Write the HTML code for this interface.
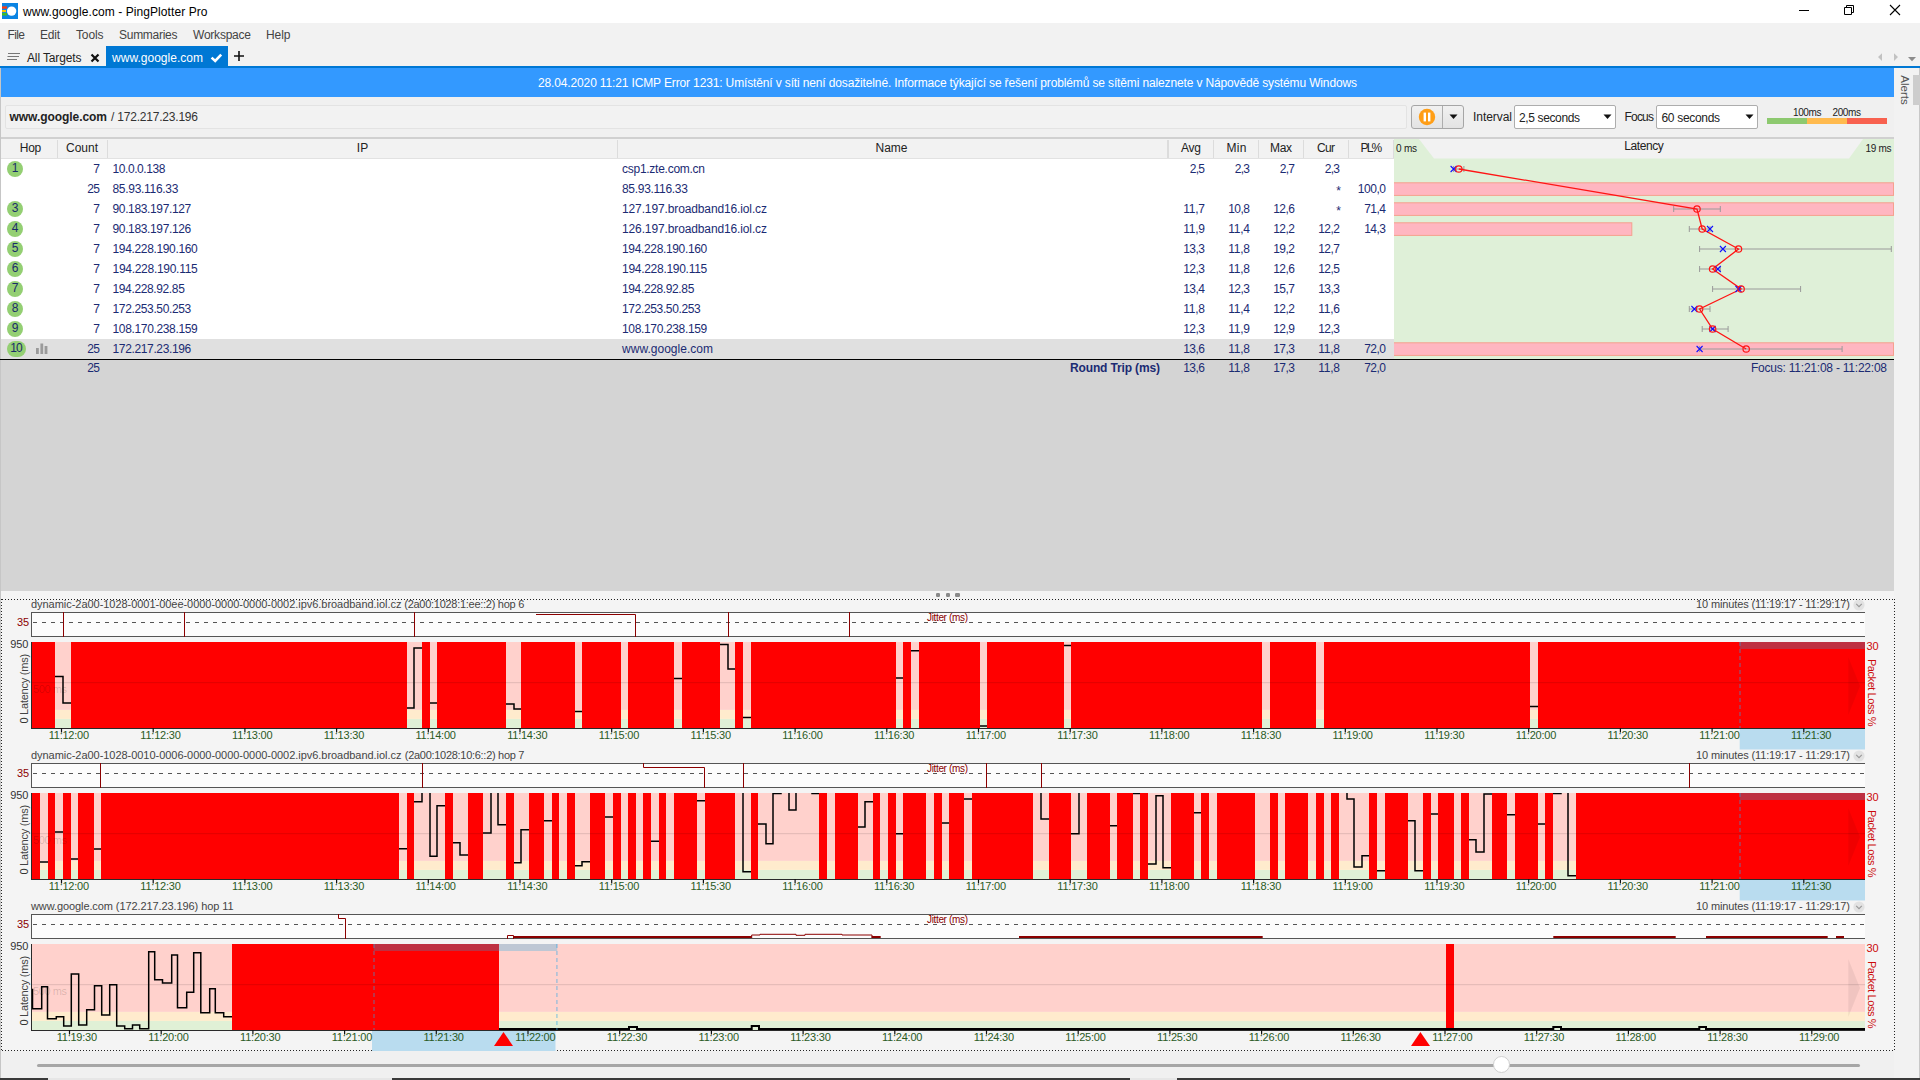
<!DOCTYPE html>
<html lang="en"><head><meta charset="utf-8"><title>www.google.com - PingPlotter Pro</title>
<style>
html,body{margin:0;padding:0;}
body{width:1920px;height:1080px;overflow:hidden;background:#f0f0f0;position:relative;font-family:"Liberation Sans",sans-serif;}
#app div,#app span,#app svg{position:absolute;}
#app span{white-space:nowrap;}
#app{position:absolute;left:0;top:0;width:1920px;height:1080px;overflow:hidden;}
</style></head><body><div id="app">
<div style="left:0px;top:0px;width:1920px;height:23px;background:#ffffff;"></div>
<svg style="left:2px;top:3px" width="16" height="16" viewBox="0 0 16 16"><rect x="0" y="0" width="16" height="16" fill="#0b84e3"/><rect x="0" y="3.4" width="5" height="2.3" fill="#ff3a10"/><rect x="0" y="7" width="4" height="2.1" fill="#ffc400"/><rect x="0" y="10" width="5" height="2.5" fill="#3fba2a"/><circle cx="9.6" cy="8.1" r="4.7" fill="#fff"/></svg>
<span style="left:23.00px;top:4.20px;font-size:12px;line-height:17px;color:#000;letter-spacing:0.078px;">www.google.com - PingPlotter Pro</span>
<svg style="left:1780px;top:0" width="140" height="23" viewBox="0 0 140 23"><path d="M19 10.5h10" stroke="#000" stroke-width="1" fill="none"/><path d="M64.5 7.5h7v7h-7z M66.5 7.5v-2h7v7h-2" stroke="#000" stroke-width="1" fill="none"/><path d="M110 5l10 10 M120 5l-10 10" stroke="#000" stroke-width="1.1" fill="none"/></svg>
<div style="left:0px;top:23px;width:1920px;height:45px;background:#f2f2f2;"></div>
<span style="left:7.50px;top:27.20px;font-size:12px;line-height:17px;color:#444;letter-spacing:-0.612px;">File</span>
<span style="left:40.00px;top:27.20px;font-size:12px;line-height:17px;color:#444;letter-spacing:-0.226px;">Edit</span>
<span style="left:76.00px;top:27.20px;font-size:12px;line-height:17px;color:#444;letter-spacing:-0.129px;">Tools</span>
<span style="left:119.00px;top:27.20px;font-size:12px;line-height:17px;color:#444;letter-spacing:-0.273px;">Summaries</span>
<span style="left:193.00px;top:27.20px;font-size:12px;line-height:17px;color:#444;letter-spacing:-0.225px;">Workspace</span>
<span style="left:266.00px;top:27.20px;font-size:12px;line-height:17px;color:#444;letter-spacing:-0.060px;">Help</span>
<svg style="left:7px;top:52px" width="14" height="10" viewBox="0 0 14 10"><path d="M1 1.5h12 M0.5 4.5h11.5 M0 7.5h10" stroke="#777" stroke-width="1.2" fill="none"/></svg>
<span style="left:27.00px;top:50.20px;font-size:12px;line-height:17px;color:#222;letter-spacing:-0.131px;">All Targets</span>
<svg style="left:90px;top:53px" width="10" height="10" viewBox="0 0 10 10"><path d="M1.5 1.5l7 7 M8.5 1.5l-7 7" stroke="#111" stroke-width="2.2" fill="none"/></svg>
<div style="left:106px;top:46px;width:122px;height:22px;background:#0078d4;"></div>
<span style="left:112.00px;top:50.20px;font-size:12px;line-height:17px;color:#fff;letter-spacing:0.022px;">www.google.com</span>
<svg style="left:210px;top:52px" width="13" height="11" viewBox="0 0 13 11"><path d="M1.6 5.6l3.6 3.4 6-6.4" stroke="#fff" stroke-width="2.6" fill="none"/></svg>
<svg style="left:233px;top:50px" width="12" height="12" viewBox="0 0 12 12"><path d="M6 1v10 M1 6h10" stroke="#111" stroke-width="1.6" fill="none"/></svg>
<svg style="left:1874px;top:51px" width="46" height="12" viewBox="0 0 46 12"><path d="M8 2.3l-4 3.8 4 3.8z M20 2.3l4 3.8-4 3.8z" fill="#c2c2c2"/><path d="M34 6h8l-4 4.2z" fill="#8c8c8c"/></svg>
<div style="left:0px;top:66px;width:1920px;height:2px;background:#0078d4;"></div>
<div style="left:1px;top:68px;width:1893px;height:29px;background:#3399ff;"></div>
<span style="left:538.00px;top:75.20px;font-size:12px;line-height:17px;color:#fff;letter-spacing:-0.139px;">28.04.2020 11:21 ICMP Error 1231: Umístění v síti není dosažitelné. Informace týkající se řešení problémů se sítěmi naleznete v Nápovědě systému Windows</span>
<div style="left:1894px;top:68px;width:26px;height:1012px;background:#f2f2f2;"></div>
<div style="left:1919px;top:68px;width:1px;height:1010px;background:#c8c8c8;"></div>
<span style="left:1889.50px;top:82.20px;font-size:11.5px;line-height:16px;color:#555;transform:rotate(90deg);transform-origin:center center;">Alerts</span>
<div style="left:1913px;top:75px;width:7px;height:30px;background:#cdcdcd;"></div>
<div style="left:1px;top:97px;width:1893px;height:40px;background:#f0f0f0;"></div>
<div style="left:5px;top:105px;width:1402px;height:24px;background:#f2f2f2;border:1px solid #e3e3e3;box-sizing:border-box;border-radius:2px;"></div>
<span style="left:9.50px;top:109.20px;font-size:12px;line-height:17px;color:#222;letter-spacing:-0.056px;font-weight:bold;">www.google.com</span>
<span style="left:111.00px;top:109.20px;font-size:12px;line-height:17px;color:#333;letter-spacing:-0.206px;">/ 172.217.23.196</span>
<div style="left:1411px;top:105px;width:53px;height:24px;background:linear-gradient(#f1f1f1,#e3e3e3);border:1px solid #a6a6a6;box-sizing:border-box;border-radius:3px;"></div>
<div style="left:1442px;top:106px;width:1px;height:22px;background:#adadad;"></div>
<svg style="left:1418px;top:108px" width="18" height="18" viewBox="0 0 18 18"><circle cx="9" cy="9" r="8.2" fill="#ff9e16"/><rect x="5.6" y="4.6" width="2.4" height="8.8" fill="#fff"/><rect x="10" y="4.6" width="2.4" height="8.8" fill="#fff"/></svg>
<svg style="left:1449px;top:114px" width="9" height="6" viewBox="0 0 9 6"><path d="M0.5 0.5h8l-4 4.5z" fill="#111"/></svg>
<span style="left:1473.00px;top:109.20px;font-size:12px;line-height:17px;color:#222;letter-spacing:-0.050px;">Interval</span>
<div style="left:1514px;top:105px;width:102px;height:24px;background:#fff;border:1px solid #adadad;box-sizing:border-box;border-radius:2px;"></div>
<span style="left:1519.00px;top:110.20px;font-size:12px;line-height:17px;color:#222;letter-spacing:-0.371px;">2,5 seconds</span>
<svg style="left:1603px;top:114px" width="9" height="6" viewBox="0 0 9 6"><path d="M0.5 0.5h8l-4 4.5z" fill="#111"/></svg>
<span style="left:1624.50px;top:109.20px;font-size:12px;line-height:17px;color:#222;letter-spacing:-0.795px;">Focus</span>
<div style="left:1656px;top:105px;width:102px;height:24px;background:#fff;border:1px solid #adadad;box-sizing:border-box;border-radius:2px;"></div>
<span style="left:1661.50px;top:110.20px;font-size:12px;line-height:17px;color:#222;letter-spacing:-0.320px;">60 seconds</span>
<svg style="left:1745px;top:114px" width="9" height="6" viewBox="0 0 9 6"><path d="M0.5 0.5h8l-4 4.5z" fill="#111"/></svg>
<span style="left:1793.00px;top:106.20px;font-size:10px;line-height:14px;color:#222;letter-spacing:-0.379px;">100ms</span>
<span style="left:1832.50px;top:106.20px;font-size:10px;line-height:14px;color:#222;letter-spacing:-0.379px;">200ms</span>
<div style="left:1766.5px;top:118.3px;width:40px;height:6px;background:#8dc96f;"></div>
<div style="left:1806.5px;top:118.3px;width:40.5px;height:6px;background:#ffba4e;"></div>
<div style="left:1847px;top:118.3px;width:39.5px;height:6px;background:#f8614f;"></div>
<div style="left:1px;top:137px;width:1893px;height:2px;background:#d0d0d0;"></div>
<div style="left:1px;top:139px;width:1893px;height:20px;background:#f2f2f2;"></div>
<div style="left:1px;top:158px;width:1393px;height:1px;background:#e2e2e2;"></div>
<div style="left:1px;top:159px;width:1393px;height:200px;background:#ffffff;"></div>
<div style="left:1px;top:339px;width:1393px;height:20px;background:#e0e0e0;"></div>
<div style="left:1px;top:360px;width:1893px;height:231px;background:#d4d4d4;"></div>
<div style="left:0px;top:68px;width:1px;height:1010px;background:#c6c6c6;"></div>
<div style="left:57px;top:140px;width:1px;height:18px;background:#dcdcdc;"></div>
<div style="left:107px;top:140px;width:1px;height:18px;background:#dcdcdc;"></div>
<div style="left:617px;top:140px;width:1px;height:18px;background:#dcdcdc;"></div>
<div style="left:1168px;top:140px;width:1px;height:18px;background:#dcdcdc;"></div>
<div style="left:1213px;top:140px;width:1px;height:18px;background:#dcdcdc;"></div>
<div style="left:1258px;top:140px;width:1px;height:18px;background:#dcdcdc;"></div>
<div style="left:1303px;top:140px;width:1px;height:18px;background:#dcdcdc;"></div>
<div style="left:1348px;top:140px;width:1px;height:18px;background:#dcdcdc;"></div>
<div style="left:1393px;top:140px;width:1px;height:18px;background:#dcdcdc;"></div>
<div style="left:1166.5px;top:140px;width:1px;height:18px;background:#dcdcdc;"></div>
<span style="left:19.75px;top:140.00px;font-size:12px;line-height:17px;color:#222;letter-spacing:-0.257px;">Hop</span>
<span style="left:66.00px;top:140.00px;font-size:12px;line-height:17px;color:#222;letter-spacing:-0.006px;">Count</span>
<span style="left:356.83px;top:140.00px;font-size:12px;line-height:17px;color:#222;">IP</span>
<span style="left:875.50px;top:140.00px;font-size:12px;line-height:17px;color:#222;letter-spacing:-0.004px;">Name</span>
<span style="left:1181.00px;top:140.00px;font-size:12px;line-height:17px;color:#222;letter-spacing:-0.231px;">Avg</span>
<span style="left:1226.50px;top:140.00px;font-size:12px;line-height:17px;color:#222;letter-spacing:0.332px;">Min</span>
<span style="left:1270.00px;top:140.00px;font-size:12px;line-height:17px;color:#222;letter-spacing:-0.335px;">Max</span>
<span style="left:1317.00px;top:140.00px;font-size:12px;line-height:17px;color:#222;letter-spacing:-0.668px;">Cur</span>
<span style="left:1360.55px;top:140.00px;font-size:12px;line-height:17px;color:#222;letter-spacing:-1.924px;">PL%</span>
<div style="left:7px;top:160.7px;width:16px;height:16px;border-radius:8px;background:#94cf73"></div>
<span style="left:11.66px;top:160.40px;font-size:12px;line-height:17px;color:#1a2a6a;">1</span>
<span style="left:93.33px;top:161.40px;font-size:12px;line-height:17px;color:#1b2b73;">7</span>
<span style="left:112.50px;top:161.40px;font-size:12px;line-height:17px;color:#1b2b73;letter-spacing:-0.426px;">10.0.0.138</span>
<span style="left:622.00px;top:161.40px;font-size:12px;line-height:17px;color:#1b2b73;letter-spacing:-0.264px;">csp1.zte.com.cn</span>
<span style="left:1189.66px;top:161.40px;font-size:12px;line-height:17px;color:#1b2b73;letter-spacing:-0.671px;">2,5</span>
<span style="left:1234.66px;top:161.40px;font-size:12px;line-height:17px;color:#1b2b73;letter-spacing:-0.671px;">2,3</span>
<span style="left:1279.66px;top:161.40px;font-size:12px;line-height:17px;color:#1b2b73;letter-spacing:-0.671px;">2,7</span>
<span style="left:1324.66px;top:161.40px;font-size:12px;line-height:17px;color:#1b2b73;letter-spacing:-0.671px;">2,3</span>
<span style="left:87.26px;top:181.40px;font-size:12px;line-height:17px;color:#1b2b73;letter-spacing:-0.608px;">25</span>
<span style="left:112.50px;top:181.40px;font-size:12px;line-height:17px;color:#1b2b73;letter-spacing:-0.304px;">85.93.116.33</span>
<span style="left:622.00px;top:181.40px;font-size:12px;line-height:17px;color:#1b2b73;letter-spacing:-0.304px;">85.93.116.33</span>
<span style="left:1336.33px;top:182.90px;font-size:12px;line-height:17px;color:#1b2b73;">*</span>
<span style="left:1357.72px;top:181.40px;font-size:12px;line-height:17px;color:#1b2b73;letter-spacing:-0.438px;">100,0</span>
<div style="left:7px;top:200.7px;width:16px;height:16px;border-radius:8px;background:#94cf73"></div>
<span style="left:11.66px;top:200.40px;font-size:12px;line-height:17px;color:#1a2a6a;">3</span>
<span style="left:93.33px;top:201.40px;font-size:12px;line-height:17px;color:#1b2b73;">7</span>
<span style="left:112.50px;top:201.40px;font-size:12px;line-height:17px;color:#1b2b73;letter-spacing:-0.357px;">90.183.197.127</span>
<span style="left:622.00px;top:201.40px;font-size:12px;line-height:17px;color:#1b2b73;letter-spacing:-0.125px;">127.197.broadband16.iol.cz</span>
<span style="left:1183.19px;top:201.40px;font-size:12px;line-height:17px;color:#1b2b73;letter-spacing:-0.218px;">11,7</span>
<span style="left:1228.19px;top:201.40px;font-size:12px;line-height:17px;color:#1b2b73;letter-spacing:-0.515px;">10,8</span>
<span style="left:1273.19px;top:201.40px;font-size:12px;line-height:17px;color:#1b2b73;letter-spacing:-0.515px;">12,6</span>
<span style="left:1336.33px;top:202.90px;font-size:12px;line-height:17px;color:#1b2b73;">*</span>
<span style="left:1364.19px;top:201.40px;font-size:12px;line-height:17px;color:#1b2b73;letter-spacing:-0.515px;">71,4</span>
<div style="left:7px;top:220.7px;width:16px;height:16px;border-radius:8px;background:#94cf73"></div>
<span style="left:11.66px;top:220.40px;font-size:12px;line-height:17px;color:#1a2a6a;">4</span>
<span style="left:93.33px;top:221.40px;font-size:12px;line-height:17px;color:#1b2b73;">7</span>
<span style="left:112.50px;top:221.40px;font-size:12px;line-height:17px;color:#1b2b73;letter-spacing:-0.357px;">90.183.197.126</span>
<span style="left:622.00px;top:221.40px;font-size:12px;line-height:17px;color:#1b2b73;letter-spacing:-0.125px;">126.197.broadband16.iol.cz</span>
<span style="left:1183.19px;top:221.40px;font-size:12px;line-height:17px;color:#1b2b73;letter-spacing:-0.218px;">11,9</span>
<span style="left:1228.19px;top:221.40px;font-size:12px;line-height:17px;color:#1b2b73;letter-spacing:-0.218px;">11,4</span>
<span style="left:1273.19px;top:221.40px;font-size:12px;line-height:17px;color:#1b2b73;letter-spacing:-0.515px;">12,2</span>
<span style="left:1318.19px;top:221.40px;font-size:12px;line-height:17px;color:#1b2b73;letter-spacing:-0.515px;">12,2</span>
<span style="left:1364.19px;top:221.40px;font-size:12px;line-height:17px;color:#1b2b73;letter-spacing:-0.515px;">14,3</span>
<div style="left:7px;top:240.7px;width:16px;height:16px;border-radius:8px;background:#94cf73"></div>
<span style="left:11.66px;top:240.40px;font-size:12px;line-height:17px;color:#1a2a6a;">5</span>
<span style="left:93.33px;top:241.40px;font-size:12px;line-height:17px;color:#1b2b73;">7</span>
<span style="left:112.50px;top:241.40px;font-size:12px;line-height:17px;color:#1b2b73;letter-spacing:-0.346px;">194.228.190.160</span>
<span style="left:622.00px;top:241.40px;font-size:12px;line-height:17px;color:#1b2b73;letter-spacing:-0.346px;">194.228.190.160</span>
<span style="left:1183.19px;top:241.40px;font-size:12px;line-height:17px;color:#1b2b73;letter-spacing:-0.515px;">13,3</span>
<span style="left:1228.19px;top:241.40px;font-size:12px;line-height:17px;color:#1b2b73;letter-spacing:-0.218px;">11,8</span>
<span style="left:1273.19px;top:241.40px;font-size:12px;line-height:17px;color:#1b2b73;letter-spacing:-0.515px;">19,2</span>
<span style="left:1318.19px;top:241.40px;font-size:12px;line-height:17px;color:#1b2b73;letter-spacing:-0.515px;">12,7</span>
<div style="left:7px;top:260.7px;width:16px;height:16px;border-radius:8px;background:#94cf73"></div>
<span style="left:11.66px;top:260.40px;font-size:12px;line-height:17px;color:#1a2a6a;">6</span>
<span style="left:93.33px;top:261.40px;font-size:12px;line-height:17px;color:#1b2b73;">7</span>
<span style="left:112.50px;top:261.40px;font-size:12px;line-height:17px;color:#1b2b73;letter-spacing:-0.283px;">194.228.190.115</span>
<span style="left:622.00px;top:261.40px;font-size:12px;line-height:17px;color:#1b2b73;letter-spacing:-0.283px;">194.228.190.115</span>
<span style="left:1183.19px;top:261.40px;font-size:12px;line-height:17px;color:#1b2b73;letter-spacing:-0.515px;">12,3</span>
<span style="left:1228.19px;top:261.40px;font-size:12px;line-height:17px;color:#1b2b73;letter-spacing:-0.218px;">11,8</span>
<span style="left:1273.19px;top:261.40px;font-size:12px;line-height:17px;color:#1b2b73;letter-spacing:-0.515px;">12,6</span>
<span style="left:1318.19px;top:261.40px;font-size:12px;line-height:17px;color:#1b2b73;letter-spacing:-0.515px;">12,5</span>
<div style="left:7px;top:280.7px;width:16px;height:16px;border-radius:8px;background:#94cf73"></div>
<span style="left:11.66px;top:280.40px;font-size:12px;line-height:17px;color:#1a2a6a;">7</span>
<span style="left:93.33px;top:281.40px;font-size:12px;line-height:17px;color:#1b2b73;">7</span>
<span style="left:112.50px;top:281.40px;font-size:12px;line-height:17px;color:#1b2b73;letter-spacing:-0.370px;">194.228.92.85</span>
<span style="left:622.00px;top:281.40px;font-size:12px;line-height:17px;color:#1b2b73;letter-spacing:-0.370px;">194.228.92.85</span>
<span style="left:1183.19px;top:281.40px;font-size:12px;line-height:17px;color:#1b2b73;letter-spacing:-0.515px;">13,4</span>
<span style="left:1228.19px;top:281.40px;font-size:12px;line-height:17px;color:#1b2b73;letter-spacing:-0.515px;">12,3</span>
<span style="left:1273.19px;top:281.40px;font-size:12px;line-height:17px;color:#1b2b73;letter-spacing:-0.515px;">15,7</span>
<span style="left:1318.19px;top:281.40px;font-size:12px;line-height:17px;color:#1b2b73;letter-spacing:-0.515px;">13,3</span>
<div style="left:7px;top:300.7px;width:16px;height:16px;border-radius:8px;background:#94cf73"></div>
<span style="left:11.66px;top:300.40px;font-size:12px;line-height:17px;color:#1a2a6a;">8</span>
<span style="left:93.33px;top:301.40px;font-size:12px;line-height:17px;color:#1b2b73;">7</span>
<span style="left:112.50px;top:301.40px;font-size:12px;line-height:17px;color:#1b2b73;letter-spacing:-0.357px;">172.253.50.253</span>
<span style="left:622.00px;top:301.40px;font-size:12px;line-height:17px;color:#1b2b73;letter-spacing:-0.357px;">172.253.50.253</span>
<span style="left:1183.19px;top:301.40px;font-size:12px;line-height:17px;color:#1b2b73;letter-spacing:-0.218px;">11,8</span>
<span style="left:1228.19px;top:301.40px;font-size:12px;line-height:17px;color:#1b2b73;letter-spacing:-0.218px;">11,4</span>
<span style="left:1273.19px;top:301.40px;font-size:12px;line-height:17px;color:#1b2b73;letter-spacing:-0.515px;">12,2</span>
<span style="left:1318.19px;top:301.40px;font-size:12px;line-height:17px;color:#1b2b73;letter-spacing:-0.218px;">11,6</span>
<div style="left:7px;top:320.7px;width:16px;height:16px;border-radius:8px;background:#94cf73"></div>
<span style="left:11.66px;top:320.40px;font-size:12px;line-height:17px;color:#1a2a6a;">9</span>
<span style="left:93.33px;top:321.40px;font-size:12px;line-height:17px;color:#1b2b73;">7</span>
<span style="left:112.50px;top:321.40px;font-size:12px;line-height:17px;color:#1b2b73;letter-spacing:-0.346px;">108.170.238.159</span>
<span style="left:622.00px;top:321.40px;font-size:12px;line-height:17px;color:#1b2b73;letter-spacing:-0.346px;">108.170.238.159</span>
<span style="left:1183.19px;top:321.40px;font-size:12px;line-height:17px;color:#1b2b73;letter-spacing:-0.515px;">12,3</span>
<span style="left:1228.19px;top:321.40px;font-size:12px;line-height:17px;color:#1b2b73;letter-spacing:-0.218px;">11,9</span>
<span style="left:1273.19px;top:321.40px;font-size:12px;line-height:17px;color:#1b2b73;letter-spacing:-0.515px;">12,9</span>
<span style="left:1318.19px;top:321.40px;font-size:12px;line-height:17px;color:#1b2b73;letter-spacing:-0.515px;">12,3</span>
<div style="left:7px;top:340.7px;width:19px;height:16px;border-radius:8px;background:#94cf73"></div>
<span style="left:10.25px;top:340.40px;font-size:12px;line-height:17px;color:#1a2a6a;letter-spacing:-0.848px;">10</span>
<span style="left:87.26px;top:341.40px;font-size:12px;line-height:17px;color:#1b2b73;letter-spacing:-0.608px;">25</span>
<span style="left:112.50px;top:341.40px;font-size:12px;line-height:17px;color:#1b2b73;letter-spacing:-0.357px;">172.217.23.196</span>
<span style="left:622.00px;top:341.40px;font-size:12px;line-height:17px;color:#1b2b73;letter-spacing:0.022px;">www.google.com</span>
<span style="left:1183.19px;top:341.40px;font-size:12px;line-height:17px;color:#1b2b73;letter-spacing:-0.515px;">13,6</span>
<span style="left:1228.19px;top:341.40px;font-size:12px;line-height:17px;color:#1b2b73;letter-spacing:-0.218px;">11,8</span>
<span style="left:1273.19px;top:341.40px;font-size:12px;line-height:17px;color:#1b2b73;letter-spacing:-0.515px;">17,3</span>
<span style="left:1318.19px;top:341.40px;font-size:12px;line-height:17px;color:#1b2b73;letter-spacing:-0.218px;">11,8</span>
<span style="left:1364.19px;top:341.40px;font-size:12px;line-height:17px;color:#1b2b73;letter-spacing:-0.515px;">72,0</span>
<svg style="left:36px;top:343px" width="12" height="11" viewBox="0 0 12 11"><rect x="0" y="5" width="2.8" height="6" fill="#9a9a9a"/><rect x="4.4" y="0.5" width="2.8" height="10.5" fill="#9a9a9a"/><rect x="8.6" y="3" width="2.8" height="8" fill="#9a9a9a"/></svg>
<div style="left:0px;top:359px;width:1894px;height:1px;background:#000;"></div>
<span style="left:87.26px;top:360.20px;font-size:12px;line-height:17px;color:#1b2b73;letter-spacing:-0.608px;">25</span>
<span style="left:1070.00px;top:360.20px;font-size:12px;line-height:17px;color:#1b2b73;letter-spacing:-0.142px;font-weight:bold;">Round Trip (ms)</span>
<span style="left:1183.19px;top:360.20px;font-size:12px;line-height:17px;color:#1b2b73;letter-spacing:-0.515px;">13,6</span>
<span style="left:1228.19px;top:360.20px;font-size:12px;line-height:17px;color:#1b2b73;letter-spacing:-0.218px;">11,8</span>
<span style="left:1273.19px;top:360.20px;font-size:12px;line-height:17px;color:#1b2b73;letter-spacing:-0.515px;">17,3</span>
<span style="left:1318.19px;top:360.20px;font-size:12px;line-height:17px;color:#1b2b73;letter-spacing:-0.218px;">11,8</span>
<span style="left:1364.19px;top:360.20px;font-size:12px;line-height:17px;color:#1b2b73;letter-spacing:-0.515px;">72,0</span>
<span style="left:1751.00px;top:360.20px;font-size:12px;line-height:17px;color:#1b2b73;letter-spacing:-0.226px;">Focus: 11:21:08 - 11:22:08</span>
<svg style="left:1394px;top:139px" width="500" height="220" viewBox="1394 139 500 220"><rect x="1394" y="139" width="500" height="220" fill="#dff0d8"/><polygon points="1419,139 1863,139 1849,158.6 1434,158.6" fill="#f2f2f2"/><rect x="1393.5" y="182.8" width="500.0" height="12.6" fill="#ffb6c1" stroke="#f6a08e" stroke-width="1"/><rect x="1393.5" y="202.8" width="500.0" height="12.6" fill="#ffb6c1" stroke="#f6a08e" stroke-width="1"/><rect x="1393.5" y="222.8" width="238.3" height="12.6" fill="#ffb6c1" stroke="#f6a08e" stroke-width="1"/><rect x="1393.5" y="342.8" width="500.0" height="12.6" fill="#ffb6c1" stroke="#f6a08e" stroke-width="1"/><path d="M1453.6 169H1463.9 M1453.6 166v6 M1463.9 166v6" stroke="#9a9a9a" stroke-width="1" fill="none"/><path d="M1673.7 209H1720.3 M1673.7 206v6 M1720.3 206v6" stroke="#9a9a9a" stroke-width="1" fill="none"/><path d="M1689.3 229H1710.0 M1689.3 226v6 M1710.0 226v6" stroke="#9a9a9a" stroke-width="1" fill="none"/><path d="M1699.6 249H1891.3 M1699.6 246v6 M1891.3 246v6" stroke="#9a9a9a" stroke-width="1" fill="none"/><path d="M1699.6 269H1720.3 M1699.6 266v6 M1720.3 266v6" stroke="#9a9a9a" stroke-width="1" fill="none"/><path d="M1712.6 289H1800.6 M1712.6 286v6 M1800.6 286v6" stroke="#9a9a9a" stroke-width="1" fill="none"/><path d="M1689.3 309H1710.0 M1689.3 306v6 M1710.0 306v6" stroke="#9a9a9a" stroke-width="1" fill="none"/><path d="M1702.2 329H1728.1 M1702.2 326v6 M1728.1 326v6" stroke="#9a9a9a" stroke-width="1" fill="none"/><path d="M1699.6 349H1842.1 M1699.6 346v6 M1842.1 346v6" stroke="#9a9a9a" stroke-width="1" fill="none"/><polyline points="1458.8,169 1697.0,209 1702.2,229 1738.5,249 1712.6,269 1741.1,289 1699.6,309 1712.6,329 1746.2,349" stroke="#ff1414" stroke-width="1.3" fill="none"/><path d="M1450.6 166l6 6 M1456.6 166l-6 6" stroke="#1010ff" stroke-width="1.1" fill="none"/><circle cx="1458.8" cy="169" r="3.2" stroke="#ff1414" stroke-width="1.2" fill="none"/><circle cx="1697.0" cy="209" r="3.2" stroke="#ff1414" stroke-width="1.2" fill="none"/><path d="M1707.0 226l6 6 M1713.0 226l-6 6" stroke="#1010ff" stroke-width="1.1" fill="none"/><circle cx="1702.2" cy="229" r="3.2" stroke="#ff1414" stroke-width="1.2" fill="none"/><path d="M1719.9 246l6 6 M1725.9 246l-6 6" stroke="#1010ff" stroke-width="1.1" fill="none"/><circle cx="1738.5" cy="249" r="3.2" stroke="#ff1414" stroke-width="1.2" fill="none"/><path d="M1714.8 266l6 6 M1720.8 266l-6 6" stroke="#1010ff" stroke-width="1.1" fill="none"/><circle cx="1712.6" cy="269" r="3.2" stroke="#ff1414" stroke-width="1.2" fill="none"/><path d="M1735.5 286l6 6 M1741.5 286l-6 6" stroke="#1010ff" stroke-width="1.1" fill="none"/><circle cx="1741.1" cy="289" r="3.2" stroke="#ff1414" stroke-width="1.2" fill="none"/><path d="M1691.4 306l6 6 M1697.4 306l-6 6" stroke="#1010ff" stroke-width="1.1" fill="none"/><circle cx="1699.6" cy="309" r="3.2" stroke="#ff1414" stroke-width="1.2" fill="none"/><path d="M1709.6 326l6 6 M1715.6 326l-6 6" stroke="#1010ff" stroke-width="1.1" fill="none"/><circle cx="1712.6" cy="329" r="3.2" stroke="#ff1414" stroke-width="1.2" fill="none"/><path d="M1696.6 346l6 6 M1702.6 346l-6 6" stroke="#1010ff" stroke-width="1.1" fill="none"/><circle cx="1746.2" cy="349" r="3.2" stroke="#ff1414" stroke-width="1.2" fill="none"/></svg>
<span style="left:1396.00px;top:142.00px;font-size:10px;line-height:14px;color:#222;letter-spacing:-0.223px;">0 ms</span>
<span style="left:1865.50px;top:142.00px;font-size:10px;line-height:14px;color:#222;letter-spacing:-0.308px;">19 ms</span>
<span style="left:1624.25px;top:138.30px;font-size:12px;line-height:17px;color:#222;letter-spacing:-0.422px;">Latency</span>
<div style="left:1px;top:591px;width:1893px;height:460px;background:#f4f4f4;"></div>
<div style="left:0px;top:591px;width:1px;height:489px;background:#c6c6c6;"></div>
<div style="left:936.0999999999999px;top:592.8px;width:4.4px;height:4.4px;background:#8a8a8a;border-radius:1.3px;"></div>
<div style="left:945.5999999999999px;top:592.8px;width:4.4px;height:4.4px;background:#8a8a8a;border-radius:1.3px;"></div>
<div style="left:955.1999999999999px;top:592.8px;width:4.4px;height:4.4px;background:#8a8a8a;border-radius:1.3px;"></div>
<svg style="left:0;top:591px" width="1900" height="465" viewBox="0 591 1900 465"><path d="M2 599.5H1895 M1894.5 599V1051 M2 1050.5H1895 M1.5 599V1051" stroke="#222" stroke-width="1" stroke-dasharray="1 2" fill="none" shape-rendering="crispEdges"/></svg>
<svg style="left:0;top:600px" width="1894" height="151" viewBox="0 600 1894 151"><defs><clipPath id="c0"><rect x="31" y="642" width="1834" height="86"/></clipPath><clipPath id="j0"><rect x="31" y="612" width="1834" height="25"/></clipPath></defs><rect x="1739.7" y="729" width="125.3" height="20.5" fill="#b9dcef"/><rect x="31" y="612" width="1834" height="24" fill="#fcfcfc"/><path d="M31 612.5H1865 M31 636.5H1865 M31.5 612V637" stroke="#555" stroke-width="1" fill="none"/><path d="M33 622.5H1865" stroke="#555" stroke-width="1" stroke-dasharray="4 5" fill="none"/><g clip-path="url(#j0)" stroke="#8b0000" fill="none" stroke-width="1"><path d="M63.5 612V637 M184.5 612V637 M414.5 612V637 M536 614.5H635.5V637 M728.5 612V637 M849.5 612V637"/></g><rect x="31" y="642" width="1834" height="67.89" fill="#ffd1cc"/><rect x="31" y="709.89" width="1834" height="9.05" fill="#ffebcd"/><rect x="31" y="718.95" width="1834" height="9.05" fill="#e0f0d6"/><rect x="31.0" y="642" width="24.0" height="86" fill="#ff0000"/><rect x="71.0" y="642" width="336.0" height="86" fill="#ff0000"/><rect x="422.0" y="642" width="8.0" height="86" fill="#ff0000"/><rect x="437.0" y="642" width="69.0" height="86" fill="#ff0000"/><rect x="521.0" y="642" width="54.0" height="86" fill="#ff0000"/><rect x="582.0" y="642" width="39.0" height="86" fill="#ff0000"/><rect x="628.0" y="642" width="46.0" height="86" fill="#ff0000"/><rect x="682.0" y="642" width="38.0" height="86" fill="#ff0000"/><rect x="735.0" y="642" width="8.0" height="86" fill="#ff0000"/><rect x="751.0" y="642" width="145.0" height="86" fill="#ff0000"/><rect x="903.0" y="642" width="8.0" height="86" fill="#ff0000"/><rect x="919.0" y="642" width="61.0" height="86" fill="#ff0000"/><rect x="987.0" y="642" width="77.0" height="86" fill="#ff0000"/><rect x="1071.0" y="642" width="191.0" height="86" fill="#ff0000"/><rect x="1270.0" y="642" width="46.0" height="86" fill="#ff0000"/><rect x="1324.0" y="642" width="206.0" height="86" fill="#ff0000"/><rect x="1538.0" y="642" width="327.0" height="86" fill="#ff0000"/><path d="M31 682.7H1865" stroke="#000" stroke-opacity="0.12" stroke-width="1"/><path d="M55.0 676.6H63.0V703.0H71.0M407.0 708.0H414.0V648.0H422.0M430.0 703.0H437.0M506.0 704.0H514.0V709.0H521.0M575.0 711.6H582.0M621.0 -1000.0H628.0M674.0 678.6H682.0M720.0 644.6H728.0V669.0H735.0M743.0 717.6H751.0M896.0 678.0H903.0M911.0 650.8H919.0M980.0 726.0H987.0M1064.0 645.6H1071.0M1262.0 -1000.0H1270.0M1316.0 -1000.0H1324.0M1530.0 706.6H1538.0" stroke="#000" stroke-width="1.5" fill="none" clip-path="url(#c0)"/><rect x="1739.7" y="642" width="125.29999999999995" height="7" fill="#17abe8" fill-opacity="0.28"/><path d="M1740.0 642V728" stroke="#2aa6e6" stroke-opacity="0.45" stroke-width="1.4" stroke-dasharray="4 3" fill="none" clip-path="url(#c0)"/><polygon points="1848.3,657 1860,686 1848.3,715" fill="#000" fill-opacity="0.06"/><path d="M31.5 642V729 M31 728.5H1865" stroke="#2a2a2a" stroke-width="1" fill="none"/><path d="M61.5 728v4.6M153.2 728v4.6M244.9 728v4.6M336.6 728v4.6M428.3 728v4.6M520.0 728v4.6M611.7 728v4.6M703.4 728v4.6M795.1 728v4.6M886.8 728v4.6M978.5 728v4.6M1070.2 728v4.6M1161.9 728v4.6M1253.6 728v4.6M1345.3 728v4.6M1437.0 728v4.6M1528.7 728v4.6M1620.4 728v4.6M1712.1 728v4.6M1803.8 728v4.6" stroke="#111" stroke-width="1.2" fill="none"/></svg>
<span style="left:31.00px;top:597.10px;font-size:11px;line-height:15px;color:#444;letter-spacing:-0.038px;">dynamic-2a00-1028-0001-00ee-0000-0000-0000-0002.ipv6.broadband.iol.cz</span>
<span style="left:404.30px;top:597.10px;font-size:11px;line-height:15px;color:#444;letter-spacing:-0.275px;">(2a00:1028:1:ee::2) hop 6</span>
<span style="left:1696.00px;top:597.10px;font-size:11px;line-height:15px;color:#444;letter-spacing:-0.128px;">10 minutes (11:19:17 - 11:29:17)</span>
<svg style="left:1853px;top:598.5px" width="12" height="12" viewBox="0 0 12 12"><circle cx="6" cy="6" r="5.6" fill="#e2e2e2"/><path d="M3.2 4.8l2.8 2.8 2.8-2.8" stroke="#999" stroke-width="1.1" fill="none"/></svg>
<span style="left:17.00px;top:615.30px;font-size:11px;line-height:15px;color:#8b0000;letter-spacing:-0.236px;">35</span>
<span style="left:927.00px;top:611.30px;font-size:10px;line-height:14px;color:#8b0000;letter-spacing:-0.344px;">Jitter (ms)</span>
<span style="left:10.30px;top:637.20px;font-size:11px;line-height:15px;color:#333;letter-spacing:-0.177px;">950</span>
<span style="left:-6.50px;top:677.40px;font-size:11px;line-height:15px;color:#444;letter-spacing:-0.234px;transform:rotate(-90deg);">Latency (ms)</span>
<span style="left:20.94px;top:713.30px;font-size:11px;line-height:15px;color:#333;transform:rotate(-90deg);">0</span>
<span style="left:33.00px;top:682.20px;font-size:11px;line-height:15px;color:rgba(0,0,0,0.16);letter-spacing:-0.415px;">500 ms</span>
<span style="left:1866.50px;top:639.40px;font-size:11px;line-height:15px;color:#cc0a0a;letter-spacing:-0.236px;">30</span>
<span style="left:1838.25px;top:684.70px;font-size:11px;line-height:15px;color:#cc0a0a;letter-spacing:-0.438px;transform:rotate(90deg);">Packet Loss %</span>
<span style="left:48.65px;top:728.40px;font-size:11px;line-height:15px;color:#2a5a24;letter-spacing:-0.215px;">11:12:00</span>
<span style="left:140.35px;top:728.40px;font-size:11px;line-height:15px;color:#2a5a24;letter-spacing:-0.215px;">11:12:30</span>
<span style="left:232.05px;top:728.40px;font-size:11px;line-height:15px;color:#2a5a24;letter-spacing:-0.215px;">11:13:00</span>
<span style="left:323.75px;top:728.40px;font-size:11px;line-height:15px;color:#2a5a24;letter-spacing:-0.215px;">11:13:30</span>
<span style="left:415.45px;top:728.40px;font-size:11px;line-height:15px;color:#2a5a24;letter-spacing:-0.215px;">11:14:00</span>
<span style="left:507.15px;top:728.40px;font-size:11px;line-height:15px;color:#2a5a24;letter-spacing:-0.215px;">11:14:30</span>
<span style="left:598.85px;top:728.40px;font-size:11px;line-height:15px;color:#2a5a24;letter-spacing:-0.215px;">11:15:00</span>
<span style="left:690.55px;top:728.40px;font-size:11px;line-height:15px;color:#2a5a24;letter-spacing:-0.215px;">11:15:30</span>
<span style="left:782.25px;top:728.40px;font-size:11px;line-height:15px;color:#2a5a24;letter-spacing:-0.215px;">11:16:00</span>
<span style="left:873.95px;top:728.40px;font-size:11px;line-height:15px;color:#2a5a24;letter-spacing:-0.215px;">11:16:30</span>
<span style="left:965.65px;top:728.40px;font-size:11px;line-height:15px;color:#2a5a24;letter-spacing:-0.215px;">11:17:00</span>
<span style="left:1057.35px;top:728.40px;font-size:11px;line-height:15px;color:#2a5a24;letter-spacing:-0.215px;">11:17:30</span>
<span style="left:1149.05px;top:728.40px;font-size:11px;line-height:15px;color:#2a5a24;letter-spacing:-0.215px;">11:18:00</span>
<span style="left:1240.75px;top:728.40px;font-size:11px;line-height:15px;color:#2a5a24;letter-spacing:-0.215px;">11:18:30</span>
<span style="left:1332.45px;top:728.40px;font-size:11px;line-height:15px;color:#2a5a24;letter-spacing:-0.215px;">11:19:00</span>
<span style="left:1424.15px;top:728.40px;font-size:11px;line-height:15px;color:#2a5a24;letter-spacing:-0.215px;">11:19:30</span>
<span style="left:1515.85px;top:728.40px;font-size:11px;line-height:15px;color:#2a5a24;letter-spacing:-0.215px;">11:20:00</span>
<span style="left:1607.55px;top:728.40px;font-size:11px;line-height:15px;color:#2a5a24;letter-spacing:-0.215px;">11:20:30</span>
<span style="left:1699.25px;top:728.40px;font-size:11px;line-height:15px;color:#2a5a24;letter-spacing:-0.215px;">11:21:00</span>
<span style="left:1790.95px;top:728.40px;font-size:11px;line-height:15px;color:#2a5a24;letter-spacing:-0.215px;">11:21:30</span>
<svg style="left:0;top:751px" width="1894" height="151" viewBox="0 751 1894 151"><defs><clipPath id="c151"><rect x="31" y="793" width="1834" height="86"/></clipPath><clipPath id="j151"><rect x="31" y="763" width="1834" height="25"/></clipPath></defs><rect x="1739.7" y="880" width="125.3" height="20.5" fill="#b9dcef"/><rect x="31" y="763" width="1834" height="24" fill="#fcfcfc"/><path d="M31 763.5H1865 M31 787.5H1865 M31.5 763V788" stroke="#555" stroke-width="1" fill="none"/><path d="M33 773.5H1865" stroke="#555" stroke-width="1" stroke-dasharray="4 5" fill="none"/><g clip-path="url(#j151)" stroke="#8b0000" fill="none" stroke-width="1"><path d="M100.5 763V788 M422.5 763V788 M643.5 763V767.5H704.5V788 M743.5 763V788 M986.5 763V788 M1041.5 763V788 M1689.5 763V788"/></g><rect x="31" y="793" width="1834" height="67.89" fill="#ffd1cc"/><rect x="31" y="860.89" width="1834" height="9.05" fill="#ffebcd"/><rect x="31" y="869.95" width="1834" height="9.05" fill="#e0f0d6"/><rect x="31.0" y="793" width="9.0" height="86" fill="#ff0000"/><rect x="48.0" y="793" width="7.0" height="86" fill="#ff0000"/><rect x="63.0" y="793" width="8.0" height="86" fill="#ff0000"/><rect x="78.0" y="793" width="16.0" height="86" fill="#ff0000"/><rect x="101.0" y="793" width="298.0" height="86" fill="#ff0000"/><rect x="407.0" y="793" width="7.0" height="86" fill="#ff0000"/><rect x="445.0" y="793" width="8.0" height="86" fill="#ff0000"/><rect x="468.0" y="793" width="15.0" height="86" fill="#ff0000"/><rect x="506.0" y="793" width="8.0" height="86" fill="#ff0000"/><rect x="529.0" y="793" width="15.0" height="86" fill="#ff0000"/><rect x="552.0" y="793" width="7.0" height="86" fill="#ff0000"/><rect x="567.0" y="793" width="8.0" height="86" fill="#ff0000"/><rect x="590.0" y="793" width="15.0" height="86" fill="#ff0000"/><rect x="613.0" y="793" width="8.0" height="86" fill="#ff0000"/><rect x="628.0" y="793" width="8.0" height="86" fill="#ff0000"/><rect x="643.0" y="793" width="8.0" height="86" fill="#ff0000"/><rect x="659.0" y="793" width="7.0" height="86" fill="#ff0000"/><rect x="674.0" y="793" width="23.0" height="86" fill="#ff0000"/><rect x="705.0" y="793" width="30.0" height="86" fill="#ff0000"/><rect x="751.0" y="793" width="7.0" height="86" fill="#ff0000"/><rect x="819.0" y="793" width="8.0" height="86" fill="#ff0000"/><rect x="835.0" y="793" width="23.0" height="86" fill="#ff0000"/><rect x="873.0" y="793" width="7.0" height="86" fill="#ff0000"/><rect x="888.0" y="793" width="8.0" height="86" fill="#ff0000"/><rect x="903.0" y="793" width="23.0" height="86" fill="#ff0000"/><rect x="934.0" y="793" width="8.0" height="86" fill="#ff0000"/><rect x="949.0" y="793" width="15.0" height="86" fill="#ff0000"/><rect x="972.0" y="793" width="61.0" height="86" fill="#ff0000"/><rect x="1049.0" y="793" width="22.0" height="86" fill="#ff0000"/><rect x="1087.0" y="793" width="23.0" height="86" fill="#ff0000"/><rect x="1117.0" y="793" width="16.0" height="86" fill="#ff0000"/><rect x="1140.0" y="793" width="8.0" height="86" fill="#ff0000"/><rect x="1171.0" y="793" width="23.0" height="86" fill="#ff0000"/><rect x="1201.0" y="793" width="8.0" height="86" fill="#ff0000"/><rect x="1217.0" y="793" width="38.0" height="86" fill="#ff0000"/><rect x="1270.0" y="793" width="8.0" height="86" fill="#ff0000"/><rect x="1285.0" y="793" width="23.0" height="86" fill="#ff0000"/><rect x="1316.0" y="793" width="8.0" height="86" fill="#ff0000"/><rect x="1331.0" y="793" width="8.0" height="86" fill="#ff0000"/><rect x="1369.0" y="793" width="8.0" height="86" fill="#ff0000"/><rect x="1385.0" y="793" width="23.0" height="86" fill="#ff0000"/><rect x="1423.0" y="793" width="8.0" height="86" fill="#ff0000"/><rect x="1438.0" y="793" width="16.0" height="86" fill="#ff0000"/><rect x="1461.0" y="793" width="8.0" height="86" fill="#ff0000"/><rect x="1492.0" y="793" width="15.0" height="86" fill="#ff0000"/><rect x="1515.0" y="793" width="23.0" height="86" fill="#ff0000"/><rect x="1545.0" y="793" width="8.0" height="86" fill="#ff0000"/><rect x="1576.0" y="793" width="289.0" height="86" fill="#ff0000"/><path d="M31 833.7H1865" stroke="#000" stroke-opacity="0.12" stroke-width="1"/><path d="M40.0 862.0H48.0M55.0 832.0H63.0M71.0 859.0H78.0M94.0 849.0H101.0M399.0 848.7H407.0M414.0 801.7H422.0V-1000.0H430.0V856.2H437.0V805.7H445.0M453.0 842.8H460.0V855.0H468.0M483.0 833.0H491.0V-1000.0H498.0V824.7H506.0M514.0 862.8H521.0V829.8H529.0M544.0 820.8H552.0M559.0 -1000.0H567.0M575.0 865.8H582.0V861.7H590.0M605.0 817.0H613.0M621.0 -1000.0H628.0M636.0 -1000.0H643.0M651.0 841.2H659.0M666.0 -1000.0H674.0M697.0 800.8H705.0M735.0 -1000.0H743.0V871.7H751.0M758.0 824.0H766.0V843.7H773.0V793.5H781.0V-1000.0H789.0V810.0H796.0V-1000.0H804.0V-1000.0H812.0V793.5H819.0M827.0 -1000.0H835.0M858.0 827.0H865.0V801.7H873.0M880.0 -1000.0H888.0M896.0 833.8H903.0M926.0 -1000.0H934.0M942.0 823.0H949.0M964.0 799.0H972.0M1033.0 -1000.0H1041.0V819.0H1049.0M1071.0 833.8H1079.0V-1000.0H1087.0M1110.0 825.8H1117.0M1133.0 793.5H1140.0M1148.0 864.0H1156.0V795.7H1163.0V867.8H1171.0M1194.0 812.8H1201.0M1209.0 -1000.0H1217.0M1255.0 -1000.0H1262.0V-1000.0H1270.0M1278.0 -1000.0H1285.0M1308.0 -1000.0H1316.0M1324.0 -1000.0H1331.0M1339.0 -1000.0H1347.0V799.0H1354.0V867.0H1362.0V855.8H1369.0M1377.0 870.8H1385.0M1408.0 820.7H1415.0V870.8H1423.0M1431.0 814.0H1438.0M1454.0 -1000.0H1461.0M1469.0 839.8H1476.0V852.0H1484.0V794.0H1492.0M1507.0 814.8H1515.0M1538.0 824.0H1545.0M1553.0 793.5H1561.0V-1000.0H1568.0V875.8H1576.0" stroke="#000" stroke-width="1.5" fill="none" clip-path="url(#c151)"/><rect x="1739.7" y="793" width="125.29999999999995" height="7" fill="#17abe8" fill-opacity="0.28"/><path d="M1740.0 793V879" stroke="#2aa6e6" stroke-opacity="0.45" stroke-width="1.4" stroke-dasharray="4 3" fill="none" clip-path="url(#c151)"/><polygon points="1848.3,808 1860,837 1848.3,866" fill="#000" fill-opacity="0.06"/><path d="M31.5 793V880 M31 879.5H1865" stroke="#2a2a2a" stroke-width="1" fill="none"/><path d="M61.5 879v4.6M153.2 879v4.6M244.9 879v4.6M336.6 879v4.6M428.3 879v4.6M520.0 879v4.6M611.7 879v4.6M703.4 879v4.6M795.1 879v4.6M886.8 879v4.6M978.5 879v4.6M1070.2 879v4.6M1161.9 879v4.6M1253.6 879v4.6M1345.3 879v4.6M1437.0 879v4.6M1528.7 879v4.6M1620.4 879v4.6M1712.1 879v4.6M1803.8 879v4.6" stroke="#111" stroke-width="1.2" fill="none"/></svg>
<span style="left:31.00px;top:748.10px;font-size:11px;line-height:15px;color:#444;letter-spacing:-0.038px;">dynamic-2a00-1028-0010-0006-0000-0000-0000-0002.ipv6.broadband.iol.cz</span>
<span style="left:404.80px;top:748.10px;font-size:11px;line-height:15px;color:#444;letter-spacing:-0.288px;">(2a00:1028:10:6::2) hop 7</span>
<span style="left:1696.00px;top:748.10px;font-size:11px;line-height:15px;color:#444;letter-spacing:-0.128px;">10 minutes (11:19:17 - 11:29:17)</span>
<svg style="left:1853px;top:749.5px" width="12" height="12" viewBox="0 0 12 12"><circle cx="6" cy="6" r="5.6" fill="#e2e2e2"/><path d="M3.2 4.8l2.8 2.8 2.8-2.8" stroke="#999" stroke-width="1.1" fill="none"/></svg>
<span style="left:17.00px;top:766.30px;font-size:11px;line-height:15px;color:#8b0000;letter-spacing:-0.236px;">35</span>
<span style="left:927.00px;top:762.30px;font-size:10px;line-height:14px;color:#8b0000;letter-spacing:-0.344px;">Jitter (ms)</span>
<span style="left:10.30px;top:788.20px;font-size:11px;line-height:15px;color:#333;letter-spacing:-0.177px;">950</span>
<span style="left:-6.50px;top:828.40px;font-size:11px;line-height:15px;color:#444;letter-spacing:-0.234px;transform:rotate(-90deg);">Latency (ms)</span>
<span style="left:20.94px;top:864.30px;font-size:11px;line-height:15px;color:#333;transform:rotate(-90deg);">0</span>
<span style="left:33.00px;top:833.20px;font-size:11px;line-height:15px;color:rgba(0,0,0,0.16);letter-spacing:-0.415px;">500 ms</span>
<span style="left:1866.50px;top:790.40px;font-size:11px;line-height:15px;color:#cc0a0a;letter-spacing:-0.236px;">30</span>
<span style="left:1838.25px;top:835.70px;font-size:11px;line-height:15px;color:#cc0a0a;letter-spacing:-0.438px;transform:rotate(90deg);">Packet Loss %</span>
<span style="left:48.65px;top:879.40px;font-size:11px;line-height:15px;color:#2a5a24;letter-spacing:-0.215px;">11:12:00</span>
<span style="left:140.35px;top:879.40px;font-size:11px;line-height:15px;color:#2a5a24;letter-spacing:-0.215px;">11:12:30</span>
<span style="left:232.05px;top:879.40px;font-size:11px;line-height:15px;color:#2a5a24;letter-spacing:-0.215px;">11:13:00</span>
<span style="left:323.75px;top:879.40px;font-size:11px;line-height:15px;color:#2a5a24;letter-spacing:-0.215px;">11:13:30</span>
<span style="left:415.45px;top:879.40px;font-size:11px;line-height:15px;color:#2a5a24;letter-spacing:-0.215px;">11:14:00</span>
<span style="left:507.15px;top:879.40px;font-size:11px;line-height:15px;color:#2a5a24;letter-spacing:-0.215px;">11:14:30</span>
<span style="left:598.85px;top:879.40px;font-size:11px;line-height:15px;color:#2a5a24;letter-spacing:-0.215px;">11:15:00</span>
<span style="left:690.55px;top:879.40px;font-size:11px;line-height:15px;color:#2a5a24;letter-spacing:-0.215px;">11:15:30</span>
<span style="left:782.25px;top:879.40px;font-size:11px;line-height:15px;color:#2a5a24;letter-spacing:-0.215px;">11:16:00</span>
<span style="left:873.95px;top:879.40px;font-size:11px;line-height:15px;color:#2a5a24;letter-spacing:-0.215px;">11:16:30</span>
<span style="left:965.65px;top:879.40px;font-size:11px;line-height:15px;color:#2a5a24;letter-spacing:-0.215px;">11:17:00</span>
<span style="left:1057.35px;top:879.40px;font-size:11px;line-height:15px;color:#2a5a24;letter-spacing:-0.215px;">11:17:30</span>
<span style="left:1149.05px;top:879.40px;font-size:11px;line-height:15px;color:#2a5a24;letter-spacing:-0.215px;">11:18:00</span>
<span style="left:1240.75px;top:879.40px;font-size:11px;line-height:15px;color:#2a5a24;letter-spacing:-0.215px;">11:18:30</span>
<span style="left:1332.45px;top:879.40px;font-size:11px;line-height:15px;color:#2a5a24;letter-spacing:-0.215px;">11:19:00</span>
<span style="left:1424.15px;top:879.40px;font-size:11px;line-height:15px;color:#2a5a24;letter-spacing:-0.215px;">11:19:30</span>
<span style="left:1515.85px;top:879.40px;font-size:11px;line-height:15px;color:#2a5a24;letter-spacing:-0.215px;">11:20:00</span>
<span style="left:1607.55px;top:879.40px;font-size:11px;line-height:15px;color:#2a5a24;letter-spacing:-0.215px;">11:20:30</span>
<span style="left:1699.25px;top:879.40px;font-size:11px;line-height:15px;color:#2a5a24;letter-spacing:-0.215px;">11:21:00</span>
<span style="left:1790.95px;top:879.40px;font-size:11px;line-height:15px;color:#2a5a24;letter-spacing:-0.215px;">11:21:30</span>
<svg style="left:0;top:902px" width="1894" height="151" viewBox="0 902 1894 151"><defs><clipPath id="c302"><rect x="31" y="944" width="1834" height="86"/></clipPath><clipPath id="j302"><rect x="31" y="914" width="1834" height="25"/></clipPath></defs><rect x="372.0" y="1031" width="183.5" height="20.5" fill="#b9dcef"/><rect x="31" y="914" width="1834" height="24" fill="#fcfcfc"/><path d="M31 914.5H1865 M31 938.5H1865 M31.5 914V939" stroke="#555" stroke-width="1" fill="none"/><path d="M33 924.5H1865" stroke="#555" stroke-width="1" stroke-dasharray="4 5" fill="none"/><g clip-path="url(#j302)" stroke="#8b0000" fill="none" stroke-width="1"><path d="M338.5 914V918.5H345.5V939"/><path d="M507.5 939V935.5H513.5V939"/><path d="M513 937H751.7 M871.7 937H880.7 M1019 937H1262.7 M1553.3 937H1675.7 M1706 937H1827.7 M1836 937H1844" stroke-width="2"/><path d="M751.7 938V935H760V934.3H796V935.3H805V934.3H842V935H872V938"/></g><rect x="31" y="944" width="1834" height="67.89" fill="#ffd1cc"/><rect x="31" y="1011.89" width="1834" height="9.05" fill="#ffebcd"/><rect x="31" y="1020.95" width="1834" height="9.05" fill="#e0f0d6"/><rect x="232.0" y="944" width="267.0" height="86" fill="#ff0000"/><rect x="1446.0" y="944" width="8.0" height="86" fill="#ff0000"/><path d="M31 984.7H1865" stroke="#000" stroke-opacity="0.12" stroke-width="1"/><path d="M32.5 988.8H32.5V1008.8H41.7V986.8H47.5V1018.8H56.3V1016.7H63.7V1026.0H71.3V974.0H78.7V1025.0H86.7V1009.7H94.5V985.7H101.7V1015.0H109.7V984.7H116.7V1026.0H124.7V1028.8H132.5V1025.0H139.7V1028.8H148.7V951.7H154.7V979.7H162.5V983.0H171.7V955.0H177.5V1007.7H186.7V992.2H193.7V952.7H200.8V1012.7H209.7V988.8H215.3V1012.7H223.7V1016.7H232.0" stroke="#000" stroke-width="1.5" fill="none" clip-path="url(#c302)"/><path d="M499 1029H629V1027H637V1029H751.7V1026H759V1029H1553.3V1027H1561V1029H1699.3V1027H1706V1029H1865" stroke="#000" stroke-width="2" fill="none" stroke-linejoin="miter"/><rect x="373.7" y="944" width="183.50000000000006" height="7" fill="#17abe8" fill-opacity="0.28"/><path d="M374.0 944V1030 M556.9000000000001 944V1030" stroke="#2aa6e6" stroke-opacity="0.45" stroke-width="1.4" stroke-dasharray="4 3" fill="none" clip-path="url(#c302)"/><polygon points="1848.3,959 1860,988 1848.3,1017" fill="#000" fill-opacity="0.06"/><path d="M31.5 944V1031 M31 1030.5H1865" stroke="#2a2a2a" stroke-width="1" fill="none"/><path d="M69.5 1030v4.6M161.2 1030v4.6M252.9 1030v4.6M344.6 1030v4.6M436.3 1030v4.6M528.0 1030v4.6M619.7 1030v4.6M711.4 1030v4.6M803.1 1030v4.6M894.8 1030v4.6M986.5 1030v4.6M1078.2 1030v4.6M1169.9 1030v4.6M1261.6 1030v4.6M1353.3 1030v4.6M1445.0 1030v4.6M1536.7 1030v4.6M1628.4 1030v4.6M1720.1 1030v4.6M1811.8 1030v4.6" stroke="#111" stroke-width="1.2" fill="none"/></svg>
<span style="left:31.00px;top:899.10px;font-size:11px;line-height:15px;color:#444;letter-spacing:-0.091px;">www.google.com (172.217.23.196) hop 11</span>
<span style="left:1696.00px;top:899.10px;font-size:11px;line-height:15px;color:#444;letter-spacing:-0.128px;">10 minutes (11:19:17 - 11:29:17)</span>
<svg style="left:1853px;top:900.5px" width="12" height="12" viewBox="0 0 12 12"><circle cx="6" cy="6" r="5.6" fill="#e2e2e2"/><path d="M3.2 4.8l2.8 2.8 2.8-2.8" stroke="#999" stroke-width="1.1" fill="none"/></svg>
<span style="left:17.00px;top:917.30px;font-size:11px;line-height:15px;color:#8b0000;letter-spacing:-0.236px;">35</span>
<span style="left:927.00px;top:913.30px;font-size:10px;line-height:14px;color:#8b0000;letter-spacing:-0.344px;">Jitter (ms)</span>
<span style="left:10.30px;top:939.20px;font-size:11px;line-height:15px;color:#333;letter-spacing:-0.177px;">950</span>
<span style="left:-6.50px;top:979.40px;font-size:11px;line-height:15px;color:#444;letter-spacing:-0.234px;transform:rotate(-90deg);">Latency (ms)</span>
<span style="left:20.94px;top:1015.30px;font-size:11px;line-height:15px;color:#333;transform:rotate(-90deg);">0</span>
<span style="left:33.00px;top:984.20px;font-size:11px;line-height:15px;color:rgba(0,0,0,0.16);letter-spacing:-0.415px;">500 ms</span>
<span style="left:1866.50px;top:941.40px;font-size:11px;line-height:15px;color:#cc0a0a;letter-spacing:-0.236px;">30</span>
<span style="left:1838.25px;top:986.70px;font-size:11px;line-height:15px;color:#cc0a0a;letter-spacing:-0.438px;transform:rotate(90deg);">Packet Loss %</span>
<span style="left:56.65px;top:1030.40px;font-size:11px;line-height:15px;color:#2a5a24;letter-spacing:-0.215px;">11:19:30</span>
<span style="left:148.35px;top:1030.40px;font-size:11px;line-height:15px;color:#2a5a24;letter-spacing:-0.215px;">11:20:00</span>
<span style="left:240.05px;top:1030.40px;font-size:11px;line-height:15px;color:#2a5a24;letter-spacing:-0.215px;">11:20:30</span>
<span style="left:331.75px;top:1030.40px;font-size:11px;line-height:15px;color:#2a5a24;letter-spacing:-0.215px;">11:21:00</span>
<span style="left:423.45px;top:1030.40px;font-size:11px;line-height:15px;color:#2a5a24;letter-spacing:-0.215px;">11:21:30</span>
<span style="left:515.15px;top:1030.40px;font-size:11px;line-height:15px;color:#2a5a24;letter-spacing:-0.215px;">11:22:00</span>
<span style="left:606.85px;top:1030.40px;font-size:11px;line-height:15px;color:#2a5a24;letter-spacing:-0.215px;">11:22:30</span>
<span style="left:698.55px;top:1030.40px;font-size:11px;line-height:15px;color:#2a5a24;letter-spacing:-0.215px;">11:23:00</span>
<span style="left:790.25px;top:1030.40px;font-size:11px;line-height:15px;color:#2a5a24;letter-spacing:-0.215px;">11:23:30</span>
<span style="left:881.95px;top:1030.40px;font-size:11px;line-height:15px;color:#2a5a24;letter-spacing:-0.215px;">11:24:00</span>
<span style="left:973.65px;top:1030.40px;font-size:11px;line-height:15px;color:#2a5a24;letter-spacing:-0.215px;">11:24:30</span>
<span style="left:1065.35px;top:1030.40px;font-size:11px;line-height:15px;color:#2a5a24;letter-spacing:-0.215px;">11:25:00</span>
<span style="left:1157.05px;top:1030.40px;font-size:11px;line-height:15px;color:#2a5a24;letter-spacing:-0.215px;">11:25:30</span>
<span style="left:1248.75px;top:1030.40px;font-size:11px;line-height:15px;color:#2a5a24;letter-spacing:-0.215px;">11:26:00</span>
<span style="left:1340.45px;top:1030.40px;font-size:11px;line-height:15px;color:#2a5a24;letter-spacing:-0.215px;">11:26:30</span>
<span style="left:1432.15px;top:1030.40px;font-size:11px;line-height:15px;color:#2a5a24;letter-spacing:-0.215px;">11:27:00</span>
<span style="left:1523.85px;top:1030.40px;font-size:11px;line-height:15px;color:#2a5a24;letter-spacing:-0.215px;">11:27:30</span>
<span style="left:1615.55px;top:1030.40px;font-size:11px;line-height:15px;color:#2a5a24;letter-spacing:-0.215px;">11:28:00</span>
<span style="left:1707.25px;top:1030.40px;font-size:11px;line-height:15px;color:#2a5a24;letter-spacing:-0.215px;">11:28:30</span>
<span style="left:1798.95px;top:1030.40px;font-size:11px;line-height:15px;color:#2a5a24;letter-spacing:-0.215px;">11:29:00</span>
<svg style="left:490px;top:1030px" width="950" height="18" viewBox="490 1030 950 18"><polygon points="503.5,1032 494,1046 513,1046" fill="#ff0000"/><polygon points="1420.4,1032 1411,1046 1430,1046" fill="#ff0000"/></svg>
<div style="left:1px;top:1051px;width:1893px;height:27px;background:#f0f0f0;"></div>
<div style="left:36.5px;top:1063.5px;width:1823px;height:3px;background:#a6a6a6;border-radius:1.5px;"></div>
<div style="left:1492.5px;top:1056px;width:17px;height:17px;background:#fff;border:1px solid #cfcfcf;border-radius:9px;box-sizing:border-box;"></div>
<div style="left:0px;top:1078px;width:1920px;height:2px;background:#3a3a3a;"></div>
<div style="left:48px;top:1078px;width:344px;height:2px;background:#e6e6e6;"></div>
<div style="left:1130px;top:1078px;width:47px;height:2px;background:#e6e6e6;"></div>
</div></body></html>
